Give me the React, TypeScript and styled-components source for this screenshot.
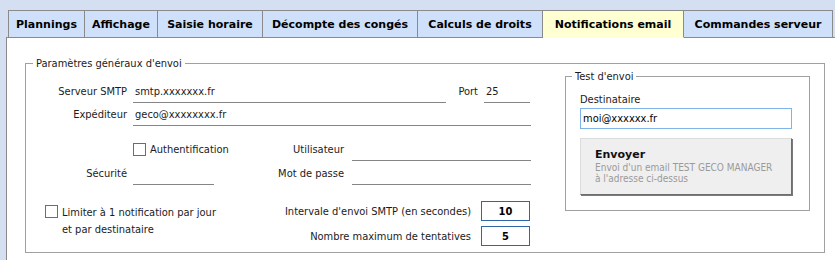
import React from 'react';
import styled, { createGlobalStyle } from 'styled-components';

const GlobalStyle = createGlobalStyle`
  html, body {
    margin: 0;
    padding: 0;
    background: #d4e0f1;
    overflow: hidden;
  }
  body {
    font-family: 'DejaVu Sans Condensed', 'DejaVu Sans', sans-serif;
    font-size: 11px;
    color: #1b1b1b;
  }
`;

const TABS = [
  { label: 'Plannings', width: 77 },
  { label: 'Affichage', width: 73 },
  { label: 'Saisie horaire', width: 105 },
  { label: 'Décompte des congés', width: 155 },
  { label: 'Calculs de droits', width: 125 },
  { label: 'Notifications email', width: 141, active: true },
  { label: 'Commandes serveur', width: 149 },
];

const Page = styled.div`
  width: 835px;
  height: 260px;
  padding: 10px 0 0 6px;
  box-sizing: border-box;
  display: flex;
  flex-direction: column;
  overflow: hidden;
`;

const TabBar = styled.div`
  display: flex;
  margin-left: 2px;
  position: relative;
  z-index: 1;
  margin-bottom: -1px;
`;

const Tab = styled.div<{ $active?: boolean; $width: number }>`
  width: ${(p) => p.$width}px;
  height: 28px;
  box-sizing: border-box;
  display: flex;
  align-items: center;
  justify-content: center;
  border: 1px solid #8a8a8a;
  border-left-width: 0;
  border-bottom-color: ${(p) => (p.$active ? '#ffffd2' : '#8a8a8a')};
  background: ${(p) => (p.$active ? '#ffffd2' : '#cfe0fb')};
  font-family: 'DejaVu Sans', sans-serif;
  font-weight: bold;
  font-size: 11px;
  color: #000;
  white-space: nowrap;
  &:first-child {
    border-left-width: 1px;
  }
`;

const Panel = styled.div`
  flex: 1;
  background: #fff;
  border-top: 1px solid #8a8a8a;
  border-left: 1px solid #8a8a8a;
  padding: 25px 0 0 18px;
  box-sizing: border-box;
`;

const Group = styled.div`
  position: relative;
  border: 1px solid #a0a0a0;
  width: 800px;
  height: 190px;
  box-sizing: border-box;
  display: flex;
  padding: 20px 14px 0 0;
`;

const Legend = styled.span<{ $left: number }>`
  position: absolute;
  top: -8px;
  left: ${(p) => p.$left}px;
  background: #fff;
  padding: 0 3px;
  line-height: 15px;
  color: #1b1b1b;
`;

const Form = styled.div`
  width: 505px;
  flex: none;
  display: flex;
  flex-direction: column;
`;

const Row = styled.div<{ $gap: number }>`
  display: flex;
  align-items: flex-end;
  margin-top: ${(p) => p.$gap}px;
  &:first-child {
    margin-top: 0;
  }
`;

const Label = styled.div<{ $width: number; $mr?: number }>`
  width: ${(p) => p.$width}px;
  margin-right: ${(p) => p.$mr ?? 6}px;
  flex: none;
  height: 19px;
  line-height: 15px;
  text-align: right;
  white-space: nowrap;
`;

const LineInput = styled.div<{ $width: number; $mr?: number }>`
  width: ${(p) => p.$width}px;
  margin-right: ${(p) => p.$mr ?? 0}px;
  flex: none;
  height: 19px;
  box-sizing: border-box;
  line-height: 15px;
  padding: 0 2px 3px;
  border-bottom: 1px solid #858585;
  white-space: nowrap;
`;

const Check = styled.label<{ $width?: number; $top?: number }>`
  display: flex;
  align-items: flex-start;
  gap: 4px;
  min-height: 19px;
  line-height: 15px;
  white-space: nowrap;
  padding-top: ${(p) => p.$top ?? 0}px;
  width: ${(p) => (p.$width ? `${p.$width}px` : 'auto')};
  flex: none;
`;

const Box = styled.span`
  width: 13px;
  height: 13px;
  box-sizing: border-box;
  border: 1px solid #6d6d6d;
  background: #fff;
  flex: none;
  margin-top: 1px;
`;

const BottomRow = styled.div`
  display: flex;
  justify-content: space-between;
  margin-top: 16px;
  padding-left: 19px;
`;

const LimitText = styled.div`
  line-height: 17px;
  margin-top: 0;
`;

const Counters = styled.div`
  display: flex;
  flex-direction: column;
  gap: 5px;
  margin-right: 1px;
`;

const Counter = styled.div`
  display: flex;
  align-items: center;
  justify-content: flex-end;
  gap: 10px;
`;

const NumBox = styled.div`
  width: 49px;
  height: 20px;
  box-sizing: border-box;
  border: 1px solid #2f66a8;
  display: flex;
  align-items: center;
  justify-content: center;
  font-weight: bold;
  color: #000;
`;

const TestBox = styled.div`
  position: relative;
  margin: -8px 0 0 34px;
  width: 245px;
  height: 135px;
  box-sizing: border-box;
  border: 1px solid #a0a0a0;
  padding: 15px 17px 0 14px;
`;

const FieldTitle = styled.div`
  line-height: 15px;
  margin-bottom: 1px;
`;

const BoxInput = styled.div`
  height: 21px;
  box-sizing: border-box;
  border: 1px solid #7eb4ea;
  padding: 0 2px;
  line-height: 19px;
  color: #000;
`;

const SendButton = styled.div`
  margin-top: 9px;
  height: 57px;
  box-sizing: border-box;
  background: #efefef;
  border: 1px solid #dcdcdc;
  border-right-color: #6e6e6e;
  border-bottom-color: #6e6e6e;
  box-shadow: 1px 1px 0 #7a7a7a;
  padding: 8px 14px 0;
`;

const ButtonTitle = styled.div`
  font-family: 'DejaVu Sans', sans-serif;
  font-weight: bold;
  font-size: 11px;
  line-height: 15px;
  color: #111;
`;

const ButtonSub = styled.div`
  font-size: 10px;
  line-height: 11px;
  color: #9a9a9a;
  &:first-of-type {
    margin-top: 1px;
  }
`;

export default function App() {
  return (
    <>
      <GlobalStyle />
      <Page>
        <TabBar>
          {TABS.map((t) => (
            <Tab key={t.label} $active={t.active} $width={t.width}>
              {t.label}
            </Tab>
          ))}
        </TabBar>
        <Panel>
          <Group>
            <Legend $left={7}>Paramètres généraux d'envoi</Legend>
            <Form>
              <Row $gap={0}>
                <Label $width={101}>Serveur SMTP</Label>
                <LineInput $width={313} $mr={8}>smtp.xxxxxxx.fr</LineInput>
                <Label $width={24} $mr={6}>Port</Label>
                <LineInput $width={46}>25</LineInput>
              </Row>
              <Row $gap={4}>
                <Label $width={101}>Expéditeur</Label>
                <LineInput $width={398}>geco@xxxxxxxx.fr</LineInput>
              </Row>
              <Row $gap={16}>
                <Label $width={101}></Label>
                <Check $width={81}>
                  <Box />
                  Authentification
                </Check>
                <Label $width={130} $mr={8}>Utilisateur</Label>
                <LineInput $width={179}></LineInput>
              </Row>
              <Row $gap={5}>
                <Label $width={101}>Sécurité</Label>
                <LineInput $width={81} $mr={0}></LineInput>
                <Label $width={130} $mr={8}>Mot de passe</Label>
                <LineInput $width={179}></LineInput>
              </Row>
              <BottomRow>
                <Check $top={3}>
                  <Box />
                  <LimitText>
                    Limiter à 1 notification par jour
                    <br />
                    et par destinataire
                  </LimitText>
                </Check>
                <Counters>
                  <Counter>
                    Intervale d'envoi SMTP (en secondes)
                    <NumBox>10</NumBox>
                  </Counter>
                  <Counter>
                    Nombre maximum de tentatives
                    <NumBox>5</NumBox>
                  </Counter>
                </Counters>
              </BottomRow>
            </Form>
            <TestBox>
              <Legend $left={6}>Test d'envoi</Legend>
              <FieldTitle>Destinataire</FieldTitle>
              <BoxInput>moi@xxxxxx.fr</BoxInput>
              <SendButton>
                <ButtonTitle>Envoyer</ButtonTitle>
                <ButtonSub>Envoi d'un email TEST GECO MANAGER</ButtonSub>
                <ButtonSub>à l'adresse ci-dessus</ButtonSub>
              </SendButton>
            </TestBox>
          </Group>
        </Panel>
      </Page>
    </>
  );
}
